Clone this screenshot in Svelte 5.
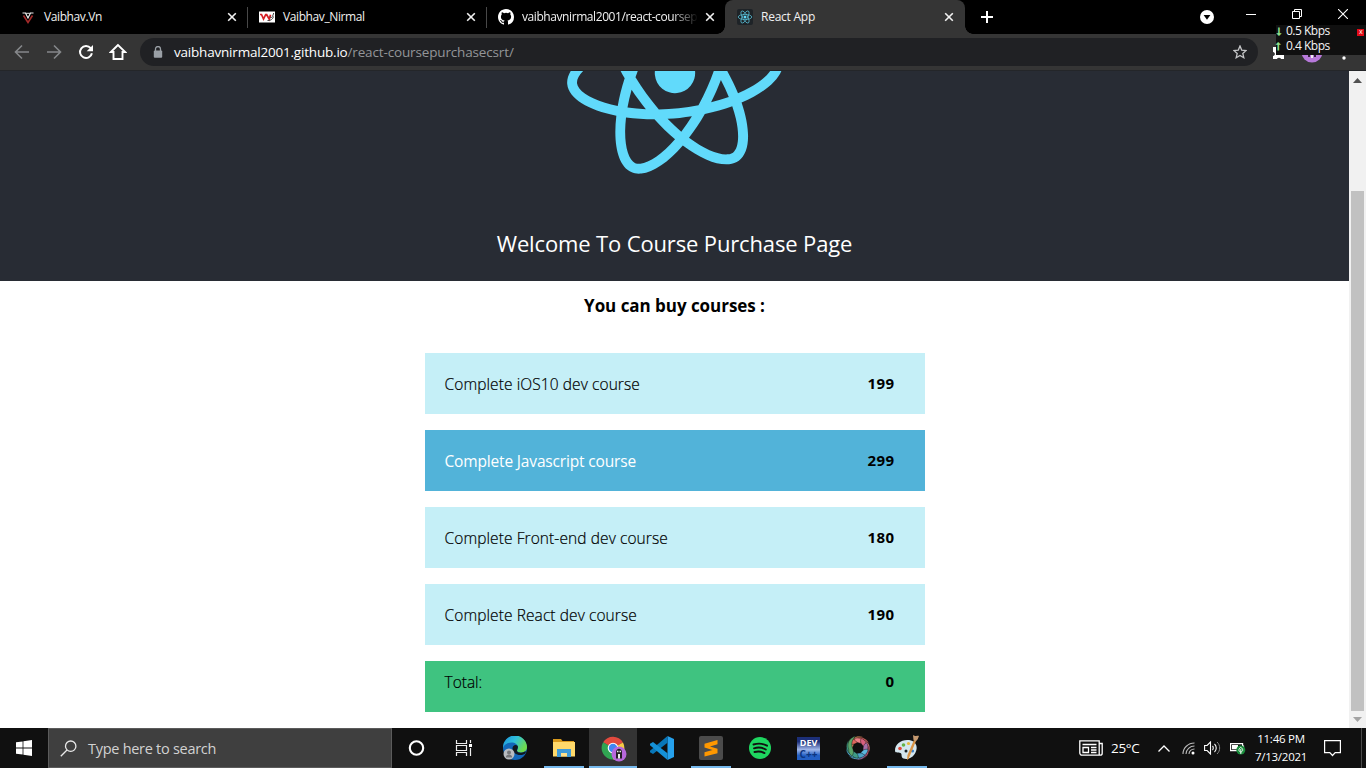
<script>
  const tabs = [
    { title: 'Vaibhav.Vn', icon: 'v' },
    { title: 'Vaibhav_Nirmal', icon: 'vn' },
    { title: 'vaibhavnirmal2001/react-coursep', icon: 'github', long: true },
    { title: 'React App', icon: 'react', active: true }
  ];
  const courses = [
    { name: 'Complete iOS10 dev course', price: 199, cls: 'ios' },
    { name: 'Complete Javascript course', price: 299, cls: 'selected' },
    { name: 'Complete Front-end dev course', price: 180, cls: 'front' },
    { name: 'Complete React dev course', price: 190, cls: 'rct' }
  ];
  const apps = [
    { id: 'cortana' }, { id: 'taskview' }, { id: 'edge' },
    { id: 'explorer', open: true }, { id: 'chrome', open: true, focused: true },
    { id: 'vscode' }, { id: 'sublime', open: true }, { id: 'spotify' },
    { id: 'dev' }, { id: 'swirl' }, { id: 'paint', open: true }
  ];
  const swirlColors = ['#d98a5a', '#e0685e', '#ef7f86', '#d8607e', '#a86fa8', '#5cb6dd', '#4aa3c7', '#3f9c86', '#5aa469'];
</script>

<div class="screen">
  <header class="tabstrip">
    {#each tabs as tab, i}
      <div class="tab" class:active={tab.active} class:divided={i < 2}>
        <span class="favicon">
          {#if tab.icon === 'v'}
            <svg width="16" height="16" viewBox="0 0 16 16"><path d="M2.500 4h3L8 9l2.500-5h3" fill="none" stroke="#eee" stroke-width="1.200"/><path d="M5.500 4.300h5" fill="none" stroke="#ddd"/><path d="M3.500 6.500 8 13.500 12.500 6.500" fill="none" stroke="#a52a2a" stroke-width="1.600"/></svg>
          {:else if tab.icon === 'vn'}
            <svg width="16" height="16" viewBox="0 0 16 16"><path fill="#fff" d="M0 2.500h16v11H0z"/><path d="M1 5.500h1.500l2 4.500 2.200-4.300h1l2.600 4.500 1.200-4.500" fill="none" stroke="#d51f25" stroke-width="1.700"/><path d="M11 7.500c.8 2.500 2.500 1 3.700-3.500M8.500 11.500c3 .5 5.500-1.500 6-4" fill="none" stroke="#444"/></svg>
          {:else if tab.icon === 'github'}
            <svg width="16" height="16" viewBox="0 0 16 16"><path fill="#fff" d="M8 0C3.580 0 0 3.580 0 8c0 3.540 2.290 6.530 5.470 7.590.4.070.55-.17.55-.38 0-.19-.01-.82-.01-1.490-2.010.37-2.530-.49-2.690-.94-.09-.23-.48-.94-.82-1.130-.28-.15-.68-.52-.01-.53.63-.01 1.080.58 1.230.82.72 1.210 1.870.87 2.330.66.070-.52.28-.87.51-1.070-1.780-.2-3.640-.89-3.640-3.950 0-.87.31-1.590.82-2.150-.08-.2-.36-1.020.08-2.120 0 0 .67-.21 2.200.82a7.600 7.600 0 0 1 4 0c1.530-1.040 2.200-.82 2.200-.82.44 1.100.16 1.920.08 2.120.51.56.82 1.270.82 2.150 0 3.070-1.870 3.750-3.650 3.950.29.25.54.73.54 1.480 0 1.070-.01 1.930-.01 2.200 0 .21.15.46.55.38A8.010 8.010 0 0 0 16 8c0-4.420-3.580-8-8-8z"/></svg>
          {:else}
            <svg width="16" height="16" viewBox="0 0 16 16"><rect width="16" height="16" rx="2" fill="#1e2327"/><g fill="none" stroke="#55b6cc" stroke-width=".8"><ellipse cx="8" cy="8" rx="6.800" ry="2.600"/><ellipse cx="8" cy="8" rx="6.800" ry="2.600" transform="rotate(60 8 8)"/><ellipse cx="8" cy="8" rx="6.800" ry="2.600" transform="rotate(120 8 8)"/></g><circle cx="8" cy="8" r="1.500" fill="#61dafb"/></svg>
          {/if}
        </span>
        <span class="title" class:long={tab.long}>{tab.title}</span>
        <svg class="close" width="10" height="10" viewBox="0 0 10 10"><path d="m1.200 1.200 7.600 7.600M8.800 1.200 1.200 8.800" stroke="#f2f2f2" stroke-width="1.600"/></svg>
      </div>
    {/each}
    <svg class="plus" width="12" height="12" viewBox="0 0 12 12"><path d="M6 0v12M0 6h12" stroke="#fff" stroke-width="2"/></svg>
    <div class="window-controls">
      <svg width="14" height="14" viewBox="0 0 14 14"><circle cx="7" cy="7" r="7" fill="#fff"/><path d="M3.600 5h6.800L7 9.800z" fill="#000"/></svg>
      <svg width="10" height="10" viewBox="0 0 10 10"><path d="M0 5.500h10" stroke="#fff"/></svg>
      <svg width="10" height="10" viewBox="0 0 10 10"><path d="M.5 2.500h7v7h-7zM2.500 2.500v-2h7v7h-2" fill="none" stroke="#fff"/></svg>
      <svg width="10" height="10" viewBox="0 0 10 10"><path d="m0 0 10 10M10 0 0 10" stroke="#fff" stroke-width="1.100"/></svg>
    </div>
  </header>

  <div class="toolbar">
    <svg width="16" height="16" viewBox="0 0 16 16"><path d="M15 8H2M8 1.500 1.500 8 8 14.500" fill="none" stroke="#85878a" stroke-width="1.600"/></svg>
    <svg width="16" height="16" viewBox="0 0 16 16"><path d="M1 8h13M8 1.500 14.500 8 8 14.500" fill="none" stroke="#85878a" stroke-width="1.600"/></svg>
    <svg width="16" height="16" viewBox="0 0 16 16"><path d="M12.700 4.200A6 6 0 1 0 13.900 9.200" fill="none" stroke="#fff" stroke-width="2"/><path d="M15 1v6.300H8.700z" fill="#fff"/></svg>
    <svg width="18" height="18" viewBox="0 0 18 18"><path d="M9 2 1.800 9h2.700v7h9V9h2.700z" fill="none" stroke="#fff" stroke-width="1.900"/></svg>
    <div class="omnibox">
      <svg width="10" height="12" viewBox="0 0 10 12"><path d="M2.500 5V3a2.500 2.500 0 0 1 5 0v2" fill="none" stroke="#9aa0a6" stroke-width="1.300"/><rect x=".8" y="4.500" width="8.400" height="7.200" rx="1" fill="#9aa0a6"/></svg>
      <div class="url"><b>vaibhavnirmal2001.github.io</b><i>/react-coursepurchasecsrt/</i></div>
      <svg class="star" width="14" height="14" viewBox="0 0 14 14"><path d="m7 1 1.700 4.100 4.400.4-3.300 2.900 1 4.300L7 10.400l-3.800 2.300 1-4.300L.9 5.500l4.400-.4z" fill="none" stroke="#c5c6c8" stroke-width="1.300"/></svg>
    </div>
    <div class="extras">
      <svg width="14" height="14" viewBox="0 0 14 14"><path fill="#fff" d="M1 2h11v3.500a2 2 0 0 1 0 4v4.800H9.200a2.300 2.300 0 0 0-4.400 0H1V11c2.500-.3 2.500-3.700 0-4z"/></svg>
      <svg width="22" height="22" viewBox="0 0 22 22"><circle cx="11" cy="11" r="10.500" fill="#b779da"/><path d="M7 8h8v8h-2v-2H9v2H7z" fill="#302237"/><path d="M10 13h2v4h-2z" fill="#eee"/></svg>
      <svg class="dots" width="4" height="16" viewBox="0 0 4 16"><circle cx="2" cy="2" r="1.700" fill="#fff"/><circle cx="2" cy="8" r="1.700" fill="#fff"/><circle cx="2" cy="14" r="1.700" fill="#fff"/></svg>
    </div>
  </div>

  <aside class="netmeter">
    <div><span class="arrow">⭣</span><span>0.5 Kbps</span><em>x</em></div>
    <div><span class="arrow">⭡</span><span>0.4 Kbps</span></div>
  </aside>

  <div class="viewport">
    <main>
      <section class="hero">
        <svg class="logo" width="372" height="263" viewBox="0 0 841.9 595.3"><g fill="#61dafb" transform="rotate(-6 420.9 296.5)"><path d="M666.3 296.5c0-32.5-40.7-63.3-103.1-82.4 14.4-63.6 8-114.2-20.2-130.4-6.5-3.8-14.1-5.6-22.4-5.6v22.3c4.6 0 8.3.9 11.4 2.6 13.6 7.8 19.5 37.5 14.9 75.7-1.1 9.4-2.9 19.3-5.1 29.4-19.6-4.8-41-8.5-63.5-10.9-13.5-18.5-27.5-35.3-41.6-50 32.6-30.3 63.2-46.9 84-46.9V78c-27.5 0-63.5 19.6-99.9 53.6-36.4-33.8-72.4-53.2-99.9-53.2v22.3c20.7 0 51.4 16.5 84 46.6-14 14.7-28 31.4-41.3 49.9-22.6 2.4-44 6.1-63.600 11-2.300-10-4-19.700-5.200-29-4.700-38.200 1.100-67.900 14.600-75.800 3-1.800 6.900-2.600 11.500-2.600V78.500c-8.400 0-16 1.800-22.600 5.600-28.100 16.200-34.400 66.700-19.900 130.100-62.200 19.200-102.700 49.900-102.700 82.300 0 32.500 40.700 63.300 103.100 82.400-14.400 63.600-8 114.200 20.200 130.400 6.500 3.800 14.100 5.600 22.500 5.600 27.500 0 63.500-19.600 99.900-53.600 36.400 33.800 72.400 53.200 99.900 53.200 8.400 0 16-1.800 22.600-5.600 28.100-16.200 34.400-66.700 19.900-130.100 62-19.100 102.500-49.900 102.500-82.300zm-130.200-66.700c-3.700 12.900-8.300 26.200-13.500 39.500-4.100-8-8.400-16-13.100-24-4.600-8-9.500-15.800-14.400-23.400 14.200 2.100 27.900 4.700 41 7.900zm-45.800 106.500c-7.800 13.500-15.800 26.300-24.100 38.200-14.900 1.300-30 2-45.200 2-15.100 0-30.200-.7-45-1.900-8.300-11.900-16.400-24.600-24.200-38-7.600-13.100-14.500-26.400-20.800-39.800 6.200-13.400 13.200-26.800 20.700-39.900 7.800-13.500 15.800-26.300 24.100-38.200 14.900-1.300 30-2 45.200-2 15.100 0 30.200.7 45 1.900 8.300 11.900 16.400 24.600 24.200 38 7.600 13.100 14.500 26.400 20.800 39.800-6.300 13.400-13.200 26.800-20.700 39.900zm32.300-13c5.400 13.400 10 26.800 13.800 39.800-13.100 3.200-26.900 5.900-41.200 8 4.900-7.700 9.800-15.600 14.400-23.700 4.600-8 8.900-16.100 13-24.100zM421.200 430c-9.300-9.600-18.600-20.300-27.800-32 9 .4 18.200.7 27.500.7 9.400 0 18.700-.2 27.800-.7-9 11.700-18.300 22.400-27.500 32zm-74.400-58.900c-14.200-2.100-27.900-4.700-41-7.900 3.700-12.900 8.300-26.200 13.500-39.500 4.100 8 8.400 16 13.100 24 4.700 8 9.500 15.800 14.400 23.400zM420.700 163c9.300 9.600 18.600 20.300 27.800 32-9-.4-18.200-.7-27.500-.7-9.400 0-18.700.2-27.800.7 9-11.700 18.300-22.400 27.500-32zm-74 58.900c-4.900 7.700-9.800 15.600-14.400 23.700-4.600 8-8.900 16-13 24-5.400-13.400-10-26.800-13.800-39.800 13.100-3.100 26.900-5.800 41.200-7.900zm-90.500 125.200c-35.400-15.100-58.300-34.900-58.300-50.600 0-15.700 22.900-35.600 58.300-50.600 8.600-3.700 18-7 27.700-10.100 5.700 19.600 13.200 40 22.500 60.900-9.200 20.800-16.600 41.100-22.200 60.600-9.900-3.100-19.300-6.500-28-10.200zM310 490c-13.600-7.800-19.500-37.500-14.900-75.700 1.100-9.400 2.900-19.300 5.100-29.400 19.600 4.800 41 8.500 63.500 10.900 13.500 18.500 27.500 35.300 41.600 50-32.600 30.300-63.200 46.900-84 46.900-4.500-.1-8.300-1-11.300-2.700zm237.200-76.200c4.700 38.200-1.100 67.900-14.600 75.800-3 1.800-6.900 2.600-11.500 2.600-20.700 0-51.400-16.500-84-46.600 14-14.700 28-31.400 41.300-49.900 22.600-2.400 44-6.100 63.600-11 2.300 10.100 4.100 19.800 5.200 29.100zm38.500-66.700c-8.600 3.700-18 7-27.700 10.100-5.700-19.600-13.200-40-22.500-60.900 9.200-20.800 16.600-41.100 22.200-60.600 9.900 3.100 19.300 6.500 28.100 10.200 35.400 15.100 58.300 34.900 58.300 50.600-.1 15.700-23 35.600-58.400 50.600z"/><circle cx="420.9" cy="296.5" r="45.7"/></g></svg>
        <h2>Welcome To Course Purchase Page</h2>
      </section>
      <h1>You can buy courses :</h1>
      <div class="courses">
        {#each courses as course}
          <div class="course {course.cls}"><span>{course.name}</span><strong>{course.price}</strong></div>
        {/each}
        <div class="course total"><span>Total:</span><strong>0</strong></div>
      </div>
    </main>
    <div class="scrollbar">
      <svg width="9" height="5" viewBox="0 0 9 5"><path d="M0 5 4.500 0 9 5z" fill="#505050"/></svg>
      <div class="thumb"></div>
      <svg width="9" height="5" viewBox="0 0 9 5"><path d="m0 0 4.500 5L9 0z" fill="#a3a3a3"/></svg>
    </div>
  </div>

  <footer class="taskbar">
    <div class="start"><svg width="16" height="16" viewBox="0 0 16 16"><path fill="#fff" d="m0 2.300 6.600-.9v6.200H0zM7.400 1.300 16 0v7.600H7.400zM0 8.400h6.600v6.200L0 13.700zM7.400 8.400H16V16l-8.600-1.200z"/></svg></div>
    <div class="search">
      <svg width="17" height="17" viewBox="0 0 17 17"><circle cx="10.700" cy="6.200" r="5.200" fill="none" stroke="#e8e8e8" stroke-width="1.300"/><path d="M7 10 .8 16.200" stroke="#e8e8e8" stroke-width="1.300"/></svg>
      <span>Type here to search</span>
    </div>
    <nav class="apps">
      {#each apps as app}
        <div class="app" class:open={app.open} class:focused={app.focused}>
          {#if app.id === 'cortana'}
            <svg width="24" height="24" viewBox="0 0 24 24"><circle cx="11.500" cy="12" r="6.700" fill="none" stroke="#fff" stroke-width="2.100"/></svg>
          {:else if app.id === 'taskview'}
            <svg class="nudge" width="24" height="24" viewBox="0 0 24 24"><path d="M4.500 4v3.500h10V4M4.500 20v-3.500h10V20M4.500 9.500h10v5h-10zM18.500 4v3M18.500 12v8" fill="none" stroke="#eee" stroke-width="1.200"/><path d="M17 8h3v3h-3z" fill="#fff"/></svg>
          {:else if app.id === 'edge'}
            <svg width="24" height="24" viewBox="0 0 24 24"><defs><linearGradient id="eg" x1="0" y1="0" x2="1" y2=".5"><stop offset="0" stop-color="#1a8fd8"/><stop offset=".5" stop-color="#2fc0dd"/><stop offset="1" stop-color="#6edb4d"/></linearGradient></defs><circle cx="12" cy="12" r="12" fill="#1267b8"/><path d="M0 12A12 12 0 0 1 24 11c0 4-3 5.500-6 5.500-2.500 0-4-1-4-2 0-.7 1-1.200 1-3 0-3-3-5-6.500-5C4 6.500 1 9 0 12z" fill="url(#eg)"/><path d="M9.500 12.500c0-3 3-4.500 5.300-2.500.5 2-.8 3.300-.8 4.500 0 2.500 5.500 3 8.500.8.500.8.300 1.500-.3 2.200-5 3.500-12.700.8-12.700-5z" fill="#101820"/><circle cx="6" cy="18" r="5.500" fill="#b8bcc0"/><circle cx="6" cy="16.500" r="2" fill="#747679"/><path d="M2.800 21.500c0-4 6.400-4 6.400 0z" fill="#747679"/></svg>
          {:else if app.id === 'explorer'}
            <svg width="24" height="24" viewBox="0 0 24 24"><path d="M1 3h8l1.500 2H22v4H1z" fill="#d99a1c"/><path d="M1 6h22v14.500H1z" fill="#ffd96a"/><path d="M5 21v-8h14v8h-4v-4H9v4z" fill="#3f9bd8"/><path d="M9 17h6v3.500H9z" fill="#ffe08a"/></svg>
          {:else if app.id === 'chrome'}
            <svg width="26" height="26" viewBox="0 0 26 26"><path d="M12 12 2.100 6.300A11.500 11.500 0 0 1 22 6.500z" fill="#e24a3e"/><path d="M12 12 22 6.500A11.500 11.500 0 0 1 12 23.500z" fill="#f7cb45"/><path d="M12 12v11.500A11.500 11.500 0 0 1 2.100 6.300z" fill="#30a552"/><circle cx="12" cy="12" r="5.300" fill="#fff"/><circle cx="12" cy="12" r="4.200" fill="#4285f4"/><circle cx="18" cy="18" r="7.500" fill="#b768dc"/><path d="M15 16.500c0-5 6-5 6 0v6h-6z" fill="#252027"/><path d="M16 14.800h1.500v1.500H16zM18.500 14.800H20v1.500h-1.500zM17 18h2v4.500h-2z" fill="#eee"/></svg>
          {:else if app.id === 'vscode'}
            <svg width="24" height="24" viewBox="0 0 24 24"><path d="m17.500 0 6.500 3v18l-6.500 3z" fill="#26a1ec"/><path d="M17.500 0v6.800L3 18 0 16.200v-1.500z" fill="#0877b9"/><path d="M17.500 24v-6.800L3 6 0 7.800v1.500z" fill="#1591d7"/></svg>
          {:else if app.id === 'sublime'}
            <svg width="24" height="24" viewBox="0 0 24 24"><rect width="24" height="24" rx="2" fill="#4b4b4b"/><path d="M18.500 4v4.300L11 10.500l7.500 2.300v4.400L5.500 20.500v-4.300L13.500 14l-8-2.500V7.800z" fill="#ff9800"/></svg>
          {:else if app.id === 'spotify'}
            <svg width="24" height="24" viewBox="0 0 24 24"><circle cx="12" cy="12" r="11" fill="#1ed760"/><path d="M5.500 8.500c5-1.500 9.500-1 13.500 1.200M6 12.300c4-1.200 8.300-.8 11.800 1.200M6.500 16c3.500-.9 7-.6 10 1.100" fill="none" stroke="#111" stroke-width="1.900" stroke-linecap="round"/></svg>
          {:else if app.id === 'dev'}
            <div class="devcpp"><span>DEV</span><span class="cpp">C++</span></div>
          {:else if app.id === 'swirl'}
            <svg width="26" height="26" viewBox="0 0 26 26">{#each swirlColors as color, n}<path d="M5 8C7 2 13-.5 19 2.500 14.500 2.500 9.800 5 8.500 10.500 7.500 13 6 15 3 15c-.5-2.500 0-5 2-7z" fill={color} stroke="#101010" stroke-width=".4" transform="rotate({n * 40} 13 13)"/>{/each}<circle cx="13" cy="13" r="4.800" fill="#101010"/></svg>
          {:else}
            <svg width="26" height="26" viewBox="0 0 26 26"><path d="M1 15.500C1 8 9 3.500 17 5.500c5.500 1.500 7 7 4.500 12-2.500 5.500-8 7.500-12 6-3-1.200-1-4.500-3-5.500-2.500-.8-5.500.5-5.500-2.500z" fill="#d4e6ee"/><circle cx="6" cy="13.500" r="1.800" fill="#df493a"/><circle cx="9.500" cy="10" r="1.800" fill="#64b348"/><circle cx="14.500" cy="8.500" r="1.600" fill="#e8b939"/><circle cx="12" cy="16" r="1.500" fill="#18242b"/><circle cx="18.500" cy="16" r="1.600" fill="#3a80c7"/><path d="m22 6-7.500 18-1.500 1 .5-5L20 5z" fill="#d99445"/><path d="M19 0c3 2 5 0 6 1-1 2-1 4-3.500 5.500L19.500 5z" fill="#c69a70"/></svg>
          {/if}
        </div>
      {/each}
    </nav>
    <div class="tray">
      <svg width="24" height="16" viewBox="0 0 24 16"><path d="M.8.800h19.400v14.400H3A2.200 2.200 0 0 1 .8 13zM20.200 3.500h3v9.700a2 2 0 0 1-2 2h-2M3.500 4.500h14M12 7.500h5.500M12 10h5.500M12 12.500h5.500M4 7.500h5.500v5H4z" fill="none" stroke="#fff" stroke-width="1.300"/></svg>
      <span class="temp">25°C</span>
      <svg class="chev" width="12" height="7" viewBox="0 0 12 7"><path d="m.5 6.500 5.500-5.500 5.500 5.500" fill="none" stroke="#fff" stroke-width="1.300"/></svg>
      <svg class="wifi" width="13" height="13" viewBox="0 0 13 13"><path d="M1 12C1 6 6 1 12.500 1M4 12c0-4.500 4-8 8.500-8M7 12c0-3 2.500-5 5.500-5" fill="none" stroke="#bbb" stroke-width="1.100"/><circle cx="11" cy="11" r="1.500" fill="#fff"/></svg>
      <svg class="vol" width="17" height="14" viewBox="0 0 17 14"><path d="M.6 4.500h2.500L6.500 1v12L3.100 9.500H.6z" fill="none" stroke="#fff" stroke-width="1.100"/><path d="M8.500 5c1 1 1 3 0 4M10.500 3c2.300 2 2.300 6 0 8" fill="none" stroke="#fff" stroke-width="1.100"/><path d="M13 1c3.500 3 3.500 9 0 12" fill="none" stroke="#888"/></svg>
      <svg class="bat" width="16" height="13" viewBox="0 0 16 13"><path d="M.6 1.600h12v7H.6zM13.500 3.500v3" fill="none" stroke="#fff" stroke-width="1.200"/><path d="M2 3h6v4.300H2z" fill="#fff"/><circle cx="10.800" cy="8" r="4.500" fill="#188c3a"/><path d="M10.800 5.300c3 2 2 4.200 0 4.800-2-.6-3-2.800 0-4.800zM10.800 7v5" fill="none" stroke="#fff" stroke-width=".9"/></svg>
      <div class="clock"><span>11:46 PM</span><span>7/13/2021</span></div>
      <svg width="17" height="17" viewBox="0 0 17 17"><path d="M.6.600h15.800v12h-5.200L8.500 15.500 5.800 12.600H.6z" fill="none" stroke="#fff" stroke-width="1.200"/></svg>
    </div>
    <div class="peek"></div>
  </footer>
</div>

<style>
  :global(body) { margin: 0; overflow: hidden; }
  * { box-sizing: border-box; }
  svg { display: block; flex: none; }
  .screen { position: relative; width: 1366px; height: 768px; display: flex; flex-direction: column; overflow: hidden; background: #fff; font-family: "Open Sans", "Noto Sans", sans-serif; }

  .tabstrip { height: 34px; flex: none; background: #000; display: flex; align-items: center; color: #f1f1f1; font-size: 12px; padding-left: 9px; }
  .tab { position: relative; width: 239px; height: 34px; flex: none; display: flex; align-items: center; padding: 0 10px 0 11px; }
  .divided { border-right: 1px solid #3e3e3e; border-image: linear-gradient(transparent 8px, #484848 8px, #484848 27px, transparent 27px) 1; }
  .favicon { width: 16px; margin-right: 8px; }
  .title { flex: 1; white-space: nowrap; letter-spacing: -0.4px; padding-bottom: 1px; }
  .tab:first-child .title { letter-spacing: -0.4px; }
  .title.long { mask-image: linear-gradient(90deg, #000 150px, transparent 176px); letter-spacing: -0.42px; }
  .active .title { letter-spacing: -0.25px; }
  .close { margin-left: 2px; }
  .tab:nth-child(3) { width: 238px; }
  .active { background: #353535; border-radius: 8px 8px 0 0; width: 240px; padding: 0 11px 0 12px; }
  .active::before, .active::after { content: ''; position: absolute; bottom: 0; width: 8px; height: 8px; }
  .active::before { left: -8px; background: radial-gradient(circle at 0 0, #000 7.5px, #353535 8px); }
  .active::after { right: -8px; background: radial-gradient(circle at 100% 0, #000 7.5px, #353535 8px); }
  .plus { margin-left: 16px; }
  .window-controls { margin-left: auto; display: flex; align-items: center; gap: 36px; padding-right: 18px; height: 28px; }
  .window-controls svg:first-child { margin: 0 -4px 0 0; }
  .window-controls { align-self: flex-start; }
  .window-controls svg:first-child { margin-top: 5px; }

  .toolbar { height: 37px; flex: none; background: #353535; border-bottom: 1px solid #242629; display: flex; align-items: center; gap: 16px; padding-left: 14px; }
  .toolbar > svg:nth-child(4) { margin-left: -1px; }
  .omnibox { width: 1118px; height: 28px; margin-left: -3px; border-radius: 14px; background: #202124; display: flex; align-items: center; padding: 0 11px 0 13px; flex: none; }
  .url { margin-left: 11px; font-size: 13.5px; line-height: 20px; flex: 1; color: #939598; white-space: nowrap; }
  .url b { font-weight: 400; color: #fff; letter-spacing: -0.2px; }
  .url i { font-style: normal; letter-spacing: -0.15px; }
  .extras { display: flex; align-items: center; gap: 15px; margin-left: -2px; }
  .dots { margin-left: 4px; }

  .netmeter { position: absolute; left: 1276px; top: 25px; width: 90px; height: 30px; background: #101010; color: #f5f5f5; font-size: 12px; }
  .netmeter div { display: flex; height: 15px; align-items: center; letter-spacing: -0.5px; line-height: 12px; padding-bottom: 3px; }
  .netmeter .arrow { width: 10px; color: #8fe08f; font-family: "DejaVu Sans", sans-serif; font-size: 11px; font-weight: 700; padding-top: 2px; }
  .netmeter em { margin: 3px 2px 0 auto; background: #e30b17; width: 7px; height: 7px; font: 7px/6px "Open Sans", sans-serif; text-align: center; }

  .viewport { flex: 1; min-height: 0; display: flex; }
  main { width: 1349px; overflow: hidden; }
  .hero { height: 210px; overflow: hidden; background: #282c34; display: flex; flex-direction: column; align-items: center; color: #fff; }
  .logo { margin-top: -129px; }
  h2 { font-size: 22px; font-weight: 400; margin: 21px 0 0; line-height: 34px; white-space: nowrap; letter-spacing: -0.14px; }
  h1 { font-size: 17px; font-weight: 700; text-align: center; line-height: 24px; margin: 13px 0 35px; color: #000; letter-spacing: -0.04px; }
  .courses { width: 500px; margin: 0 auto; display: flex; flex-direction: column; gap: 16px; }
  .course { height: 61px; background: #c5eff7; display: flex; align-items: center; justify-content: space-between; padding: 0 30px 0 20px; font-size: 15.5px; font-weight: 300; color: #000; }
  .course span { letter-spacing: .09px; -webkit-text-stroke: .2px currentColor; }
  .course strong { font-weight: 700; font-size: 15px; letter-spacing: .4px; padding-bottom: 1px; }
  .selected { background: #52b3d9; }
  .selected span { color: #fff; font-weight: 400; letter-spacing: -.16px; -webkit-text-stroke: 0; }
  .total { height: 51px; background: #3fc380; padding: 0 30px 10px 20px; }
  .total span { letter-spacing: 0; }

  .scrollbar { width: 17px; background: #f1f1f1; display: flex; flex-direction: column; align-items: center; padding: 7px 0 6px; }
  .thumb { width: 13px; height: 520px; margin: 108px 0 auto; background: #c1c1c1; }

  .taskbar { height: 40px; flex: none; background: #101010; display: flex; align-items: stretch; color: #fff; }
  .start { width: 48px; display: grid; place-items: center; }
  .search { width: 344px; background: #3f3f3f; border: 1px solid #5b5b5b; display: flex; align-items: center; padding-left: 11px; gap: 11px; font-size: 14.5px; color: #d2d2d2; letter-spacing: -.28px; }
  .apps { display: flex; }
  .app { width: 49px; display: grid; place-items: center; }
  .nudge { margin-left: -4px; }
  .open { background: linear-gradient(#76b9ed, #76b9ed) 50% 100% / 40px 2px no-repeat; }
  .focused { background: linear-gradient(#76b9ed, #76b9ed) 50% 100% / 48px 2px no-repeat, linear-gradient(#343434, #343434) 50% 0 / 48px 40px no-repeat; padding: 2px 0 0 3px; }
  .devcpp { width: 23px; height: 23px; background: linear-gradient(#1c2f78 20%, #a0b7ea 55%, #2460c4 80%); font: 700 9px/11px "Open Sans", sans-serif; display: flex; flex-direction: column; align-items: center; justify-content: space-between; }
  .devcpp span { line-height: 11px; height: 11px; }
  .devcpp .cpp { color: #0c357f; font-size: 10px; }
  .tray { margin-left: auto; display: flex; align-items: center; padding-right: 20px; }
  .peek { width: 5px; border-left: 1px solid #4a4a4a; }
  .temp { font-size: 13.5px; margin-left: 8px; width: 39px; letter-spacing: -.3px; }
  .wifi { margin-left: 12px; }
  .vol { margin-left: 9px; }
  .bat { margin-left: 9px; }
  .chev { margin-left: 8px; }
  .clock { width: 70px; display: flex; flex-direction: column; align-items: center; font-size: 11.5px; line-height: 18px; letter-spacing: -.25px; padding-bottom: 1px; }
  .tray > svg:last-child { margin-left: 8px; }
  .tray > svg:first-child { margin-right: 0; }
</style>
